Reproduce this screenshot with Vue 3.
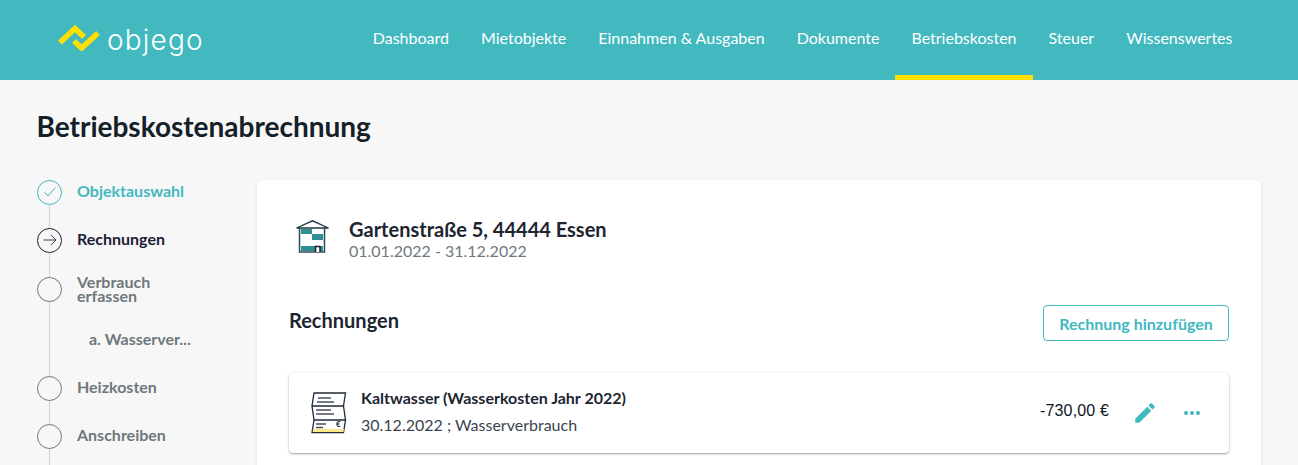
<template>
  <div class="page">
    <header class="topbar">
      <div class="logo">
        <svg class="logo-mark" width="42" height="28" viewBox="0 0 42 28">
          <path d="M2 19.500 L17 5.500 L26 14 M16 18 L23.700 25 L40 10" fill="none" stroke="#ffe000" stroke-width="5.500" />
        </svg>
        <span class="logo-text">objego</span>
      </div>
      <nav class="nav">
        <a v-for="item in navItems" :key="item" class="nav-item" :class="{ active: item === 'Betriebskosten' }">{{ item }}</a>
      </nav>
    </header>

    <h1 class="title">Betriebskostenabrechnung</h1>

    <div class="content">
      <aside class="steps">
        <div class="line"></div>
        <div v-for="step in steps" :key="step.label" class="step" :class="step.state">
          <span v-if="!step.sub" class="circle">
            <svg v-if="step.state === 'done'" width="14" height="12" viewBox="0 0 14 12">
              <path d="M1.500 6.500 L5 10 L12.500 1.500" fill="none" stroke="#42b9bf" stroke-width="1" />
            </svg>
            <svg v-if="step.state === 'current'" width="14" height="12" viewBox="0 0 14 12">
              <path d="M0.500 6 H13 M8 1 L13 6 L8 11" fill="none" stroke="#3a3f4e" stroke-width="1" />
            </svg>
          </span>
          <span class="step-label" :class="{ sub: step.sub }">{{ step.label }}</span>
        </div>
      </aside>

      <main class="card">
        <div class="object">
          <svg class="house" width="34" height="34" viewBox="0 0 34 34">
            <rect x="5" y="9" width="11" height="5" fill="#2f8f94" />
            <rect x="16" y="14" width="11" height="6" fill="#2f8f94" />
            <rect x="5" y="26" width="22" height="5" fill="#2f8f94" />
            <path d="M0.500 8 L16.500 0.800 L32.500 8 Z" fill="none" stroke="#1d3a42" stroke-width="1.300" />
            <path d="M3.500 8 V32 H28.500 V8" fill="none" stroke="#2a4a52" stroke-width="1.500" />
            <path d="M19.500 32 V26.500 H24 V32" fill="#fff" stroke="#10222a" stroke-width="1.500" />
          </svg>
          <div class="object-text">
            <div class="object-name">Gartenstraße 5, 44444 Essen</div>
            <div class="object-date">01.01.2022 - 31.12.2022</div>
          </div>
        </div>

        <div class="section-head">
          <h2 class="section-title">Rechnungen</h2>
          <button class="add-button">Rechnung hinzufügen</button>
        </div>

        <div class="invoice">
          <svg class="doc" width="36" height="42" viewBox="0 0 36 42">
            <path d="M3 1 H34.500 L32.500 14 L34.500 28 L32.500 40.500 H1 L3 28 L1 14 Z" fill="#fff" stroke="#1f2a3a" stroke-width="1.300" />
            <path d="M1 14 H32.500 M3 28 H34.500" stroke="#1f2a3a" stroke-width="1.300" />
            <path d="M2 37 H33 L32.500 40 H1.700 Z" fill="#fbe88a" />
            <path d="M7 6 H20 M6 10 H23 M5 18 H20 M5 22 H23 M5 32 H15 M5 35.500 H12" stroke="#4a4f60" stroke-width="1.300" />
            <text x="25" y="34.500" class="doc-euro">€</text>
          </svg>
          <div class="invoice-text">
            <div class="invoice-name">Kaltwasser (Wasserkosten Jahr 2022)</div>
            <div class="invoice-meta">30.12.2022 ; Wasserverbrauch</div>
          </div>
          <div class="amount">-730,00 €</div>
          <svg class="edit" width="26" height="26" viewBox="0 0 24 24">
            <path d="M3 17.250V21h3.750L17.810 9.940l-3.750-3.750L3 17.250zM20.710 7.040a1 1 0 0 0 0-1.410l-2.340-2.340a1 1 0 0 0-1.410 0l-1.830 1.830 3.750 3.750 1.830-1.830z" fill="#42b9bf" />
          </svg>
          <div class="dots"><i></i><i></i><i></i></div>
        </div>
      </main>
    </div>
  </div>
</template>

<script setup>
const navItems = ['Dashboard', 'Mietobjekte', 'Einnahmen & Ausgaben', 'Dokumente', 'Betriebskosten', 'Steuer', 'Wissenswertes']

const steps = [
  { label: 'Objektauswahl', state: 'done' },
  { label: 'Rechnungen', state: 'current' },
  { label: 'Verbrauch erfassen', state: 'open' },
  { label: 'a. Wasserver...', state: 'open', sub: true },
  { label: 'Heizkosten', state: 'open' },
  { label: 'Anschreiben', state: 'open' },
]
</script>

<style>
html,
body {
  margin: 0;
  background: #f7f7f7;
}
</style>

<style scoped>
.page {
  height: 465px;
  overflow: hidden;
  background: #f7f7f7;
  font-family: Lato, "Liberation Sans", sans-serif;
  color: #1c2530;
}

.topbar {
  height: 80px;
  background: #42b9bf;
  display: flex;
  justify-content: space-between;
  padding: 0 49.500px 0 58px;
}

.logo {
  display: flex;
  align-items: center;
  gap: 7px;
}

.logo-mark {
  margin-top: -6px;
}

.logo-text {
  font-family: Inter, Lato, sans-serif;
  font-size: 28px;
  font-weight: 300;
  letter-spacing: 1.200px;
  color: #fff;
}

.nav {
  display: flex;
}

.nav-item {
  padding: 0 16px;
  height: 75px;
  line-height: 75px;
  font-size: 16px;
  color: #fff;
  border-bottom: 5px solid transparent;
}

.nav-item.active {
  border-bottom-color: #ffe000;
}

.title {
  margin: 0;
  padding: 27px 36.500px 0;
  height: 72px;
  box-sizing: border-box;
  font-size: 28px;
  line-height: 38px;
  font-weight: 700;
  color: #142028;
}

.content {
  display: flex;
  padding: 28px 37px 0;
}

.steps {
  position: relative;
  width: 220px;
  flex-shrink: 0;
  margin-top: -12px;
}

.line {
  position: absolute;
  left: 12px;
  top: 24px;
  bottom: -100px;
  width: 1px;
  background: #cfcfcf;
}

.step {
  position: relative;
  height: 48px;
  display: flex;
  align-items: center;
  gap: 15px;
  font-size: 16px;
  font-weight: 700;
  color: #6f787c;
}

.step.done {
  color: #42b9bf;
}

.step.current {
  color: #1c2035;
}

.step:nth-child(4) {
  height: 50px;
}

.step:nth-child(5) {
  height: 50px;
}

.circle {
  width: 25px;
  height: 25px;
  box-sizing: border-box;
  flex-shrink: 0;
  border: 1px solid #6f787c;
  border-radius: 50%;
  background: #f7f7f7;
  display: flex;
  align-items: center;
  justify-content: center;
}

.done .circle {
  border-color: #42b9bf;
}

.current .circle {
  border-color: #1c2035;
}

.step-label {
  width: 110px;
  line-height: 14px;
  margin-top: -2px;
}

.step:nth-child(4) .step-label {
  margin-top: 0;
}

.step-label.sub {
  margin-left: 52px;
  margin-top: 0;
  width: auto;
}

.card {
  width: 1004px;
  height: 320px;
  flex-shrink: 0;
  box-sizing: border-box;
  background: #fff;
  border-radius: 6px;
  padding: 40px 32px 0;
  box-shadow: 0 1px 4px rgba(0, 0, 0, 0.08);
}

.object {
  display: flex;
  align-items: center;
  gap: 19px;
  padding-left: 7px;
  height: 34px;
}

.object-text {
  margin-top: 7px;
}

.object-name {
  font-size: 20px;
  line-height: 20px;
  font-weight: 700;
  color: #1c2530;
}

.object-date {
  font-size: 16px;
  line-height: 24px;
  color: #6f787c;
}

.section-head {
  margin-top: 51px;
  display: flex;
  align-items: center;
  justify-content: space-between;
}

.section-title {
  margin: 0;
  padding-bottom: 6px;
  font-size: 20px;
  font-weight: 700;
  color: #1c2530;
}

.add-button {
  width: 186px;
  height: 36px;
  background: #fff;
  border: 1px solid #42b9bf;
  border-radius: 4px;
  font-family: inherit;
  font-size: 16px;
  font-weight: 700;
  color: #42b9bf;
}

.invoice {
  margin-top: 32px;
  height: 80px;
  display: flex;
  align-items: center;
  padding: 0 29px 0 22px;
  background: #fff;
  border-radius: 4px;
  box-shadow: 0 1px 2px rgba(0, 0, 0, 0.35), 0 0 4px rgba(0, 0, 0, 0.06);
}

.doc {
  flex-shrink: 0;
}

.doc-euro {
  font-size: 8px;
  font-weight: 900;
  fill: #1f2a3a;
}

.invoice-text {
  flex: 1;
  margin-left: 14px;
  padding-bottom: 4px;
}

.invoice-name {
  font-size: 16px;
  line-height: 20px;
  font-weight: 700;
  color: #1c2530;
}

.invoice-meta {
  margin-top: 7px;
  font-size: 16px;
  line-height: 20px;
  color: #3a4450;
}

.amount {
  font-family: "Liberation Sans", sans-serif;
  font-size: 16px;
  letter-spacing: 0.150px;
  padding-bottom: 4px;
  color: #10161e;
}

.edit {
  margin-left: 23px;
}

.dots {
  margin-left: 26px;
  display: flex;
  gap: 2px;
}

.dots i {
  width: 4px;
  height: 4px;
  border-radius: 50%;
  background: #42b9bf;
}
</style>
